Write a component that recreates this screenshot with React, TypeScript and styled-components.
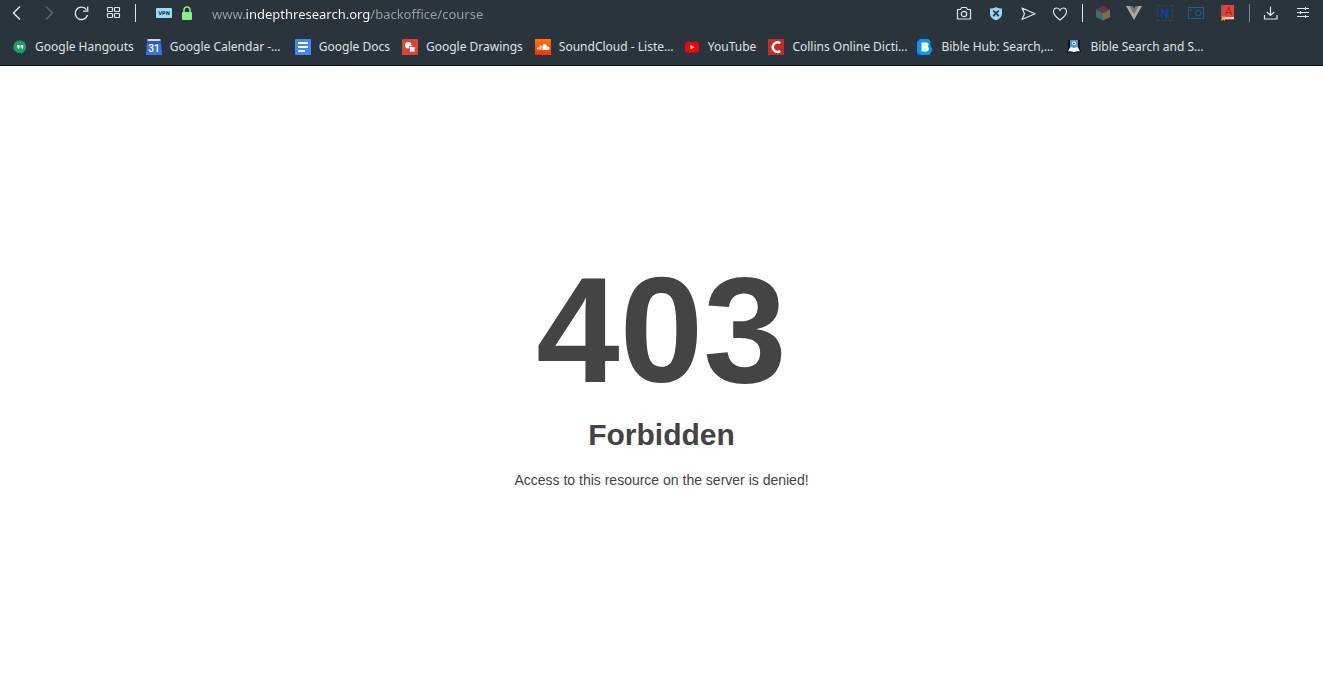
import React from "react";
import styled, { createGlobalStyle } from "styled-components";

const GlobalStyle = createGlobalStyle`
  html, body, #root { height: 100%; }
  body { margin: 0; background: #fff; }
`;

const Page = styled.div`
  min-height: 100%;
  display: flex;
  flex-direction: column;
`;

const Chrome = styled.header`
  background: #2a343d;
  border-bottom: 1px solid #0b0f12;
  font-family: "Noto Sans", sans-serif;
  color: #dfe3e6;
`;

const Toolbar = styled.div`
  display: flex;
  align-items: center;
  height: 26px;
  padding: 0 4px 0 1px;
`;

const IconButton = styled.button<{ $compact?: boolean }>`
  display: flex;
  align-items: center;
  justify-content: center;
  flex: none;
  width: ${(p) => (p.$compact ? 31 : 32)}px;
  height: 26px;
  padding: 0;
  border: 0;
  background: none;
  color: #dfe5e9;
  &:disabled { color: #5d6870; }
`;

const Divider = styled.span<{ $dim?: boolean }>`
  flex: none;
  width: 1px;
  height: 18px;
  margin: ${(p) => (p.$dim ? "0 5px 0 7px" : "0 4px 0 6px")};
  background: ${(p) => (p.$dim ? "#7d868d" : "#dfe5e9")};
`;

const AddressBar = styled.div`
  display: flex;
  align-items: center;
  flex: 1;
  min-width: 0;
  padding-left: 16px;
`;

const VpnBadge = styled.button`
  flex: none;
  width: 16px;
  height: 10px;
  padding: 0;
  border: 0;
  border-radius: 1px;
  background: #98dafc;
  color: #1c2d3a;
  font: bold 5px/10px "DejaVu Sans", sans-serif;
  text-align: center;
`;

const SiteInfo = styled(IconButton)`
  width: 30px;
`;

const AddressInput = styled.input`
  flex: 1;
  min-width: 0;
  height: 20px;
  margin: 2px 0 0 10px;
  padding: 0;
  border: 0;
  outline: 0;
  font: 13px/20px "Noto Sans", sans-serif;
  color: transparent;
  caret-color: #fff;
  background: linear-gradient(to right, #9ba1a6 33px, #fff 33px, #fff 158px, #9ba1a6 158px);
  background-clip: text;
  -webkit-background-clip: text;
`;

const Bookmarks = styled.nav`
  display: flex;
  align-items: center;
  gap: 12px;
  height: 37px;
  padding: 2px 11px 0;
  overflow: hidden;
`;

const Bookmark = styled.a`
  display: flex;
  align-items: center;
  flex: none;
  gap: 8px;
  color: inherit;
  text-decoration: none;
  font-size: 12px;
  line-height: 16px;
  white-space: nowrap;
`;

const BookmarkLabel = styled.span<{ $cut?: boolean }>`
  width: ${(p) => (p.$cut ? "113px" : "auto")};
`;

const Content = styled.main`
  flex: 1;
  display: grid;
  grid-template-rows: 30% auto;
  justify-items: center;
  color: #444;
  font: 14px/20px "Liberation Sans", Arial, sans-serif;
`;

const Message = styled.section`
  grid-row: 2;
  max-width: 800px;
  text-align: center;
`;

const Code = styled.h1`
  margin: 0;
  font-size: 150px;
  line-height: 150px;
`;

const Title = styled.h2`
  margin: 20px 0 25px;
  font-size: 30px;
  line-height: 20px;
`;

const Detail = styled.p`
  margin: 0;
`;

const Glyph = ({ children }: { children: React.ReactNode }) => (
  <svg width="20" height="20" viewBox="0 0 20 20" fill="none" stroke="currentColor" strokeWidth="1.2" aria-hidden="true">
    {children}
  </svg>
);

const Fav = ({ children }: { children: React.ReactNode }) => (
  <svg width="16" height="16" viewBox="0 0 16 16" aria-hidden="true">
    {children}
  </svg>
);

const navButtons = [
  { label: "Back", art: <path d="M13 3.5 6.5 10l6.5 6.5" strokeWidth="1.5" /> },
  { label: "Forward", disabled: true, art: <path d="M7 3.5 13.5 10 7 16.5" strokeWidth="1.4" /> },
  {
    label: "Reload",
    art: (
      <>
        <path d="M16.4 12A6.2 6.2 0 1 1 15.4 6.6" strokeWidth="1.4" />
        <path d="M16.7 3.5v4.7H12" strokeWidth="1.3" />
      </>
    ),
  },
  {
    label: "Speed dial",
    art: (
      <>
        <rect x="4.5" y="4.5" width="5" height="4" rx=".7" />
        <rect x="11.5" y="4.5" width="5" height="4" rx=".7" />
        <rect x="4.5" y="10.5" width="5" height="4" rx=".7" />
        <rect x="11.5" y="10.5" width="5" height="4" rx=".7" />
      </>
    ),
  },
];

const pageActions = [
  {
    label: "Snapshot",
    art: (
      <>
        <path d="M3.500 6.500h3l1.200-2h4.600l1.200 2h3v9.500h-13z" strokeLinejoin="round" />
        <circle cx="10" cy="11" r="2.700" />
      </>
    ),
  },
  {
    label: "Ad blocker",
    art: (
      <>
        <path d="M4 5.500c2.500 0 4-.5 6-1.500 2 1 3.500 1.500 6 1.500v5c0 3.500-2.500 5.500-6 6.800-3.500-1.300-6-3.300-6-6.800z" fill="#92d9fb" stroke="none" />
        <path d="m7.200 7.500 5.600 5.600m0-5.600-5.600 5.600" stroke="#20303b" strokeWidth="1.7" />
      </>
    ),
  },
  { label: "Send to My Flow", art: <path d="M4 5 17 10.800 4 16.500 6.500 10.800z" strokeLinejoin="round" /> },
  {
    label: "Add to bookmarks",
    art: <path d="M10 17C5.500 13.800 3.500 11.500 3.500 8.800 3.500 6.600 5 5 6.800 5 8.200 5 9.300 5.800 10 7.200 10.700 5.800 11.800 5 13.200 5 15 5 16.500 6.600 16.500 8.800c0 2.700-2 5-6.500 8.200z" />,
  },
];

const extensions = [
  {
    label: "Cube extension",
    art: (
      <g stroke="none">
        <path d="M10 3 17 6.500 10 10 3 6.500z" fill="#742f43" />
        <path d="M3 6.500 10 10v7.500L3 14z" fill="#397069" />
        <path d="M17 6.500 10 10v7.500L17 14z" fill="#7b7050" />
      </g>
    ),
  },
  {
    label: "Vue devtools",
    art: (
      <g stroke="none">
        <path d="M2 3h4l4 7 4-7h4l-8 14z" fill="#aaa" />
        <path d="M5.200 3H8.500L10 5.700 11.500 3h3.300L10 11.300z" fill="#777" />
      </g>
    ),
  },
  {
    label: "N extension",
    art: (
      <>
        <rect x="2.500" y="2.500" width="15" height="15" stroke="#3c4145" strokeWidth="1" strokeDasharray="4 2" />
        <text x="10" y="14.5" textAnchor="middle" fill="#07479c" stroke="#07479c" strokeWidth=".5" fontFamily="Liberation Sans, sans-serif" fontWeight="bold" fontSize="12">N</text>
      </>
    ),
  },
  {
    label: "Screen capture",
    art: (
      <g stroke="#14638b" strokeWidth="1">
        <rect x="2.500" y="4.500" width="15" height="11" fill="#29353b" />
        <circle cx="12.300" cy="10" r="2.700" />
        <path d="M4 7h2" />
      </g>
    ),
  },
  {
    label: "Dictionary",
    art: (
      <g stroke="none">
        <path d="M4 2h13v12H4z" fill="#eb4034" />
        <path d="M4 2h2v12H4z" fill="#a4544c" />
        <path d="M5 14h12v2H5z" fill="#ddd" />
        <path d="M4 16h13v1H4z" fill="#cf3328" />
        <path d="M4.500 13.500h3.500V18l-1.700-1.200L4.500 18z" fill="#e6af2b" />
        <text x="11.300" y="11.500" textAnchor="middle" fill="#9d2a28" fontFamily="Liberation Sans, sans-serif" fontSize="11">A</text>
      </g>
    ),
  },
];

const browserActions = [
  { label: "Downloads", art: <path d="M9.500 3.500v8.800M5.800 9l3.700 3.500L13.200 9M3.500 12v4h12.500v-4" strokeWidth="1.2" /> },
  { label: "Easy setup", art: <path d="M4 5.500h12M4 9.500h12M4 13.500h12M12.500 4v3M7.500 8v3M12.500 12v3" strokeWidth="1.1" /> },
];

const bookmarks = [
  {
    name: "Google Hangouts",
    href: "#hangouts",
    icon: (
      <>
        <path d="M9 1.500a6.200 6.200 0 0 1 6.200 6.200c0 3-2 5.300-5.200 7.300v-1.300A6.200 6.200 0 1 1 9 1.500z" fill="#1ba261" />
        <path d="M6 6h2.500v2.500L7.700 10H6.800l.5-1.500H6zM9.700 6h2.500v2.500L11.400 10h-.9l.5-1.500H9.700z" fill="#fff" />
      </>
    ),
  },
  {
    name: "Google Calendar -…",
    href: "#calendar",
    cut: true,
    icon: (
      <>
        <path d="M1.500 0h13v3h-13z" fill="#d6d6d6" />
        <path d="M1 2h14l1 14H0z" fill="#3a71df" />
        <path d="M1 2h14v3H.8z" fill="#2c5abd" />
        <text x="8" y="13" textAnchor="middle" fill="#fff" fontFamily="Roboto, sans-serif" fontWeight="500" fontSize="10">31</text>
      </>
    ),
  },
  {
    name: "Google Docs",
    href: "#docs",
    icon: (
      <>
        <rect width="16" height="16" rx="1" fill="#4386f5" />
        <path d="M3 3h10v2H3zM3 7h10v2H3zM3 11h7v2H3z" fill="#fff" />
      </>
    ),
  },
  {
    name: "Google Drawings",
    href: "#drawings",
    icon: (
      <>
        <rect width="16" height="16" rx="1" fill="#db4437" />
        <circle cx="6.200" cy="6.200" r="3.300" fill="#fff" />
        <path d="M7.500 7.500H13V13H7.500z" fill="#fff" stroke="#db4437" strokeWidth=".8" />
      </>
    ),
  },
  {
    name: "SoundCloud - Liste…",
    href: "#soundcloud",
    cut: true,
    icon: (
      <>
        <defs>
          <linearGradient id="sc" x1="0" y1="0" x2="0" y2="1">
            <stop stopColor="#ff7a00" />
            <stop offset="1" stopColor="#ff2d00" />
          </linearGradient>
        </defs>
        <rect width="16" height="16" fill="url(#sc)" />
        <path d="M2.500 8.500v2M4 7.500v3.300M5.500 6.300v4.500M7 6.500v4.300" stroke="#fff" />
        <path d="M8 5.500c2-1.200 4 .1 4.200 2 1.400-.3 2.300.6 2.300 1.700s-.8 1.700-1.700 1.700H8z" fill="#fff" />
      </>
    ),
  },
  {
    name: "YouTube",
    href: "#youtube",
    icon: (
      <>
        <rect x="1" y="3" width="14" height="10.500" rx="2.500" fill="#f00" />
        <path d="M6.500 6v4.500l4-2.250z" fill="#fff" />
      </>
    ),
  },
  {
    name: "Collins Online Dicti…",
    href: "#collins",
    cut: true,
    icon: (
      <>
        <rect width="16" height="16" fill="#c52d24" />
        <path d="M12.200 4.200A4.700 4.700 0 1 0 12.200 12" fill="none" stroke="#fff" strokeWidth="2.500" />
      </>
    ),
  },
  {
    name: "Bible Hub: Search,…",
    href: "#biblehub",
    cut: true,
    icon: (
      <>
        <path d="M3 0h8.500l2 2.500v4l2 4-3 5.500H1L0 13V3z" fill="#0895fb" />
        <path d="M1 13.500 4 16h-3z" fill="#0871c5" />
        <path d="M4.500 3.500h5c2.400 0 2.600 3.300.9 4 2.300.8 2 5-1 5H4.500z" fill="#fff" />
        <path d="M7 6h1.500M7 10h2" stroke="#8ccdfb" />
      </>
    ),
  },
  {
    name: "Bible Search and S…",
    href: "#biblesearch",
    cut: true,
    icon: (
      <>
        <path d="M2 1h12v9l1.500 3.500H10l-2 1.500-2-1.500H.5L2 10z" fill="#0d151c" />
        <path d="M4 1h8v8H4z" fill="#4e94bd" />
        <circle cx="8" cy="4.300" r="2" fill="#d8ecf5" />
        <circle cx="8" cy="4.300" r=".9" fill="#28658c" />
        <path d="M4 8.500c2-.5 3 0 4 .7 1-.7 2-1.200 4-.7l2 4c-2.500-.5-4.500-.2-6 1-1.500-1.200-3.500-1.500-6-1z" fill="#fff" />
      </>
    ),
  },
];

type Action = { label: string; art: React.ReactNode; disabled?: boolean };

const Actions = ({ items, compact }: { items: Action[]; compact?: boolean }) => (
  <>
    {items.map((item) => (
      <IconButton key={item.label} type="button" aria-label={item.label} disabled={item.disabled} $compact={compact}>
        <Glyph>{item.art}</Glyph>
      </IconButton>
    ))}
  </>
);

export default function App() {
  return (
    <Page>
      <GlobalStyle />
      <Chrome>
        <Toolbar>
          <Actions items={navButtons} />
          <Divider />
          <AddressBar>
            <VpnBadge type="button">VPN</VpnBadge>
            <SiteInfo type="button" aria-label="Site information">
              <Glyph>
                <path d="M7 9V7a3 3 0 0 1 6 0v2" stroke="#8bee85" strokeWidth="1.5" />
                <rect x="5" y="9" width="10" height="8" rx="1" fill="#8bee85" stroke="none" />
              </Glyph>
            </SiteInfo>
            <AddressInput aria-label="Address" defaultValue="www.indepthresearch.org/backoffice/course" spellCheck={false} />
          </AddressBar>
          <Actions items={pageActions} />
          <Divider />
          <Actions items={extensions} compact />
          <Divider $dim />
          <Actions items={browserActions} />
        </Toolbar>
        <Bookmarks aria-label="Bookmarks">
          {bookmarks.map((b) => (
            <Bookmark key={b.name} href={b.href}>
              <Fav>{b.icon}</Fav>
              <BookmarkLabel $cut={b.cut}>{b.name}</BookmarkLabel>
            </Bookmark>
          ))}
        </Bookmarks>
      </Chrome>
      <Content>
        <Message>
          <Code>403</Code>
          <Title>Forbidden</Title>
          <Detail>Access to this resource on the server is denied!</Detail>
        </Message>
      </Content>
    </Page>
  );
}
